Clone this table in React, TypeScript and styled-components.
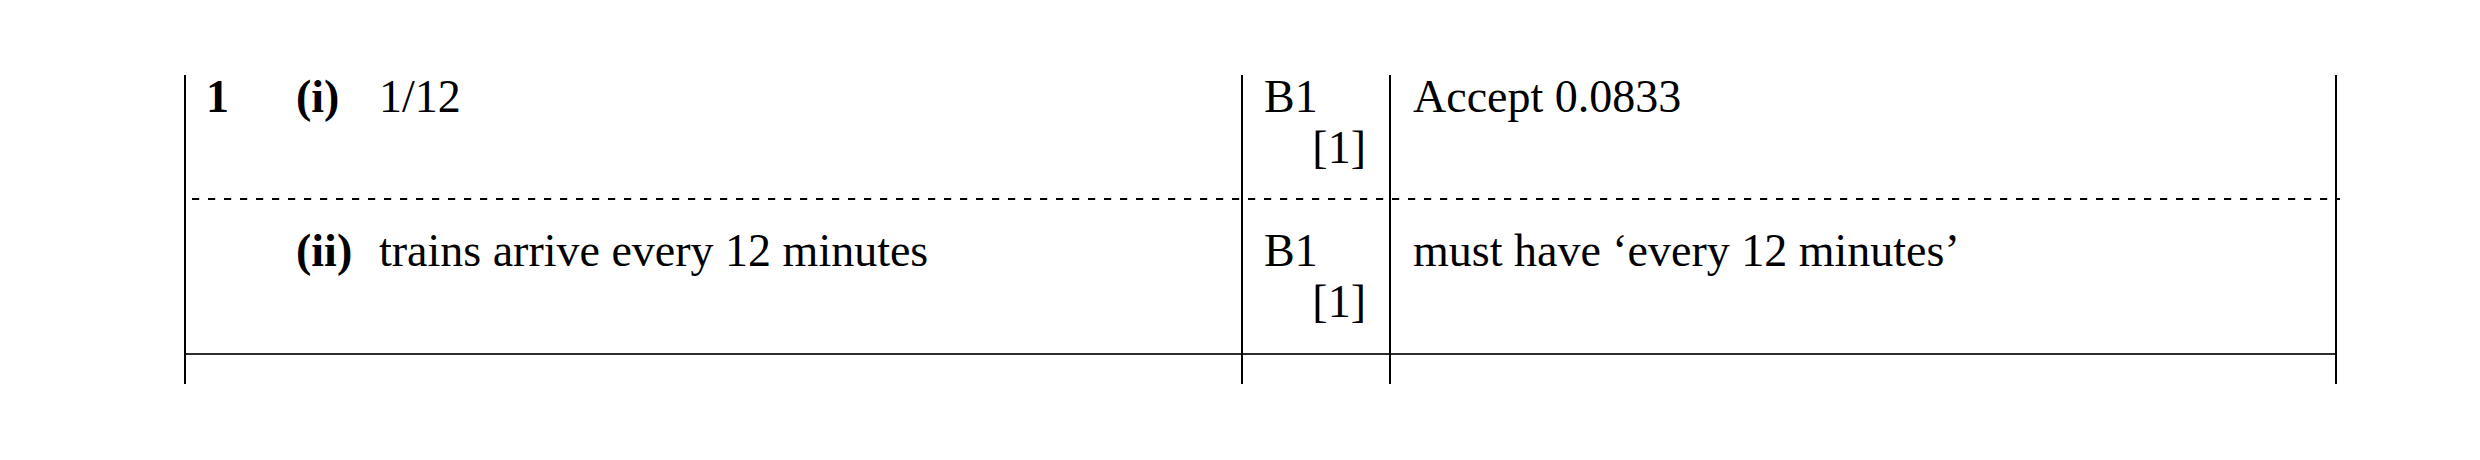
import React from "react";
import styled, { createGlobalStyle } from "styled-components";

const GlobalStyle = createGlobalStyle`
  html, body {
    margin: 0;
    padding: 0;
    background: #ffffff;
  }
  body {
    font-family: "Liberation Serif", "Times New Roman", serif;
    color: #000;
  }
`;

const Page = styled.div`
  width: 2480px;
  height: 460px;
  box-sizing: border-box;
  padding: 75px 0 0 184px;
  background: #fff;
`;

const Table = styled.div`
  display: flex;
  flex-direction: column;
  width: 2156px;
`;

type RowProps = { $divider: "dashed" | "solid" | "none"; $height: number; $padTop: number };

const Row = styled.div<RowProps>`
  display: grid;
  grid-template-columns: 1057px 148px 948px;
  height: ${(p) => p.$height}px;
  box-sizing: border-box;
  background: ${(p) =>
    p.$divider === "dashed"
      ? "repeating-linear-gradient(to right, transparent 0 8px, #000 8px 15px, #cfcfcf 15px 16px) left bottom / 100% 2px no-repeat"
      : p.$divider === "solid"
      ? "linear-gradient(#2e2e2e, #2e2e2e) left bottom / 2152px 2px no-repeat"
      : "none"};
  & > * {
    padding-top: ${(p) => p.$padTop}px;
  }
`;

const Cell = styled.div<{ $last?: boolean }>`
  box-sizing: border-box;
  border-left: 2px solid #000;
  border-right: ${(p) => (p.$last ? "2px solid #000" : "none")};
  font-size: 46px;
  line-height: 44px;
`;

const AnswerCell = styled(Cell)`
  display: grid;
  grid-template-columns: 90px 83px 1fr;
  padding-left: 20px;
  align-items: start;
`;

const QNum = styled.span`
  font-weight: bold;
`;

const Part = styled.span`
  font-weight: bold;
`;

const Answer = styled.span``;

const MarkCell = styled(Cell)`
  display: flex;
  flex-direction: column;
  padding-left: 21px;
  padding-right: 23px;
`;

const MarkCode = styled.span`
  align-self: flex-start;
`;

const MarkTotal = styled.span`
  align-self: flex-end;
  margin-top: 7px;
`;

const CommentCell = styled(Cell)`
  padding-left: 22px;
`;

type Item = {
  num?: string;
  part: string;
  answer: string;
  code: string;
  total: string;
  comment: string;
  height: number;
  padTop: number;
  divider: "dashed" | "solid";
};

const items: Item[] = [
  {
    num: "1",
    part: "(i)",
    answer: "1/12",
    code: "B1",
    total: "[1]",
    comment: "Accept 0.0833",
    height: 125,
    padTop: 0,
    divider: "dashed",
  },
  {
    part: "(ii)",
    answer: "trains arrive every 12 minutes",
    code: "B1",
    total: "[1]",
    comment: "must have \u2018every 12 minutes\u2019",
    height: 155,
    padTop: 29,
    divider: "solid",
  },
];

export default function App() {
  return (
    <>
      <GlobalStyle />
      <Page>
        <Table>
          {items.map((it, i) => (
            <Row key={i} $divider={it.divider} $height={it.height} $padTop={it.padTop}>
              <AnswerCell>
                <QNum>{it.num ?? ""}</QNum>
                <Part>{it.part}</Part>
                <Answer>{it.answer}</Answer>
              </AnswerCell>
              <MarkCell>
                <MarkCode>{it.code}</MarkCode>
                <MarkTotal>{it.total}</MarkTotal>
              </MarkCell>
              <CommentCell $last>{it.comment}</CommentCell>
            </Row>
          ))}
          <Row $divider="none" $height={29} $padTop={0}>
            <Cell />
            <Cell />
            <Cell $last />
          </Row>
        </Table>
      </Page>
    </>
  );
}
